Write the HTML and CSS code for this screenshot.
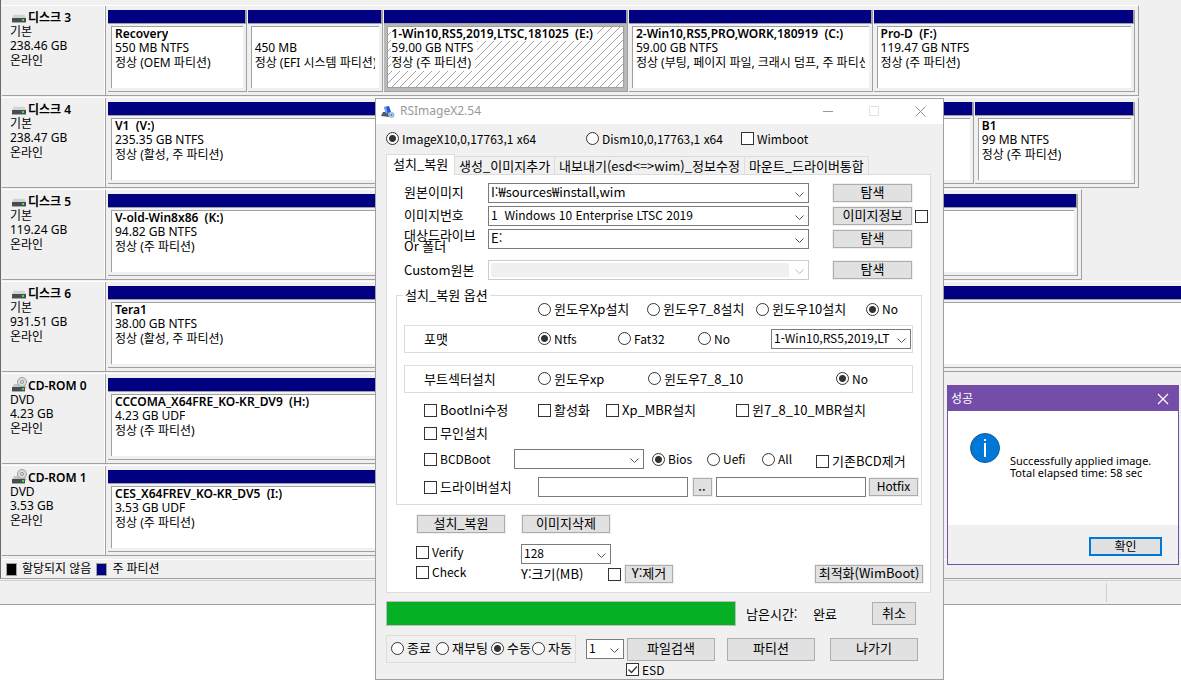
FILE: index.html
```html
<!DOCTYPE html>
<html lang="ko">
<head>
<meta charset="utf-8">
<title>RSImageX2.54</title>
<link rel="stylesheet" href="styles.css">
</head>
<body>
<svg class="defs" aria-hidden="true">
  <symbol id="drive" viewBox="0 0 14 9">
    <path d="M2 0h10l2 4H0z" fill="#cfd2d6"/><path d="M2.500 0h9l.5 1H2z" fill="#e6e8ea"/>
    <path d="M0 4h14v4H0z" fill="#4a4d50"/><path d="M0 8h14v1H0z" fill="#a5a8ab"/>
    <path d="M10 5h2v2h-2z" fill="#2fe84a"/>
  </symbol>
  <symbol id="cdrom" viewBox="0 0 16 15">
    <path d="M2 7h11l2 4H0z" fill="#c3c6c9"/>
    <path d="M0 10h13v4H0z" fill="#4a4d50"/><path d="M0 14h13v1H0z" fill="#a5a8ab"/>
    <circle cx="10" cy="5" r="4.500" fill="#d9dcde" stroke="#9a9ea1"/>
    <circle cx="10" cy="5" r="1.500" fill="#f4f4f4" stroke="#8b8f92"/>
    <path d="M10 11h2v2h-2z" fill="#2fe84a"/>
  </symbol>
</svg>

<main class="manager">
  <section class="view">
    <div class="disk disk-wide">
      <div class="disk-info"><b><svg class="ico"><use href="#drive"/></svg>디스크 3</b><span>기본</span><span>238.46 GB</span><span>온라인</span></div>
      <div class="parts">
        <article class="part" style="flex-grow:139"><div class="body"><b>Recovery</b><span>550 MB NTFS</span><span>정상 (OEM 파티션)</span></div></article>
        <article class="part" style="flex-grow:136"><div class="body"><b>&nbsp;</b><span>450 MB</span><span>정상 (EFI 시스템 파티션)</span></div></article>
        <article class="part selected" style="flex-grow:245"><div class="body"><b>1-Win10,RS5,2019,LTSC,181025 &nbsp;(E:)</b><span>59.00 GB NTFS</span><span>정상 (주 파티션)</span></div></article>
        <article class="part" style="flex-grow:245"><div class="body"><b>2-Win10,RS5,PRO,WORK,180919 &nbsp;(C:)</b><span>59.00 GB NTFS</span><span>정상 (부팅, 페이지 파일, 크래시 덤프, 주 파티션)</span></div></article>
        <article class="part" style="flex-grow:263"><div class="body"><b>Pro-D &nbsp;(F:)</b><span>119.47 GB NTFS</span><span>정상 (주 파티션)</span></div></article>
      </div>
    </div>
    <div class="disk disk-wide">
      <div class="disk-info"><b><svg class="ico"><use href="#drive"/></svg>디스크 4</b><span>기본</span><span>238.47 GB</span><span>온라인</span></div>
      <div class="parts">
        <article class="part" style="flex-grow:869"><div class="body"><b>V1 &nbsp;(V:)</b><span>235.35 GB NTFS</span><span>정상 (활성, 주 파티션)</span></div></article>
        <article class="part" style="flex-grow:160"><div class="body"><b>B1</b><span>99 MB NTFS</span><span>정상 (주 파티션)</span></div></article>
      </div>
    </div>
    <div class="disk disk-mid">
      <div class="disk-info"><b><svg class="ico"><use href="#drive"/></svg>디스크 5</b><span>기본</span><span>119.24 GB</span><span>온라인</span></div>
      <div class="parts">
        <article class="part" style="flex-grow:1"><div class="body"><b>V-old-Win8x86 &nbsp;(K:)</b><span>94.82 GB NTFS</span><span>정상 (주 파티션)</span></div></article>
      </div>
    </div>
    <div class="disk disk-full">
      <div class="disk-info"><b><svg class="ico"><use href="#drive"/></svg>디스크 6</b><span>기본</span><span>931.51 GB</span><span>온라인</span></div>
      <div class="parts">
        <article class="part" style="flex-grow:1"><div class="body"><b>Tera1</b><span>38.00 GB NTFS</span><span>정상 (활성, 주 파티션)</span></div></article>
      </div>
    </div>
    <div class="disk disk-short">
      <div class="disk-info"><b><svg class="ico cd"><use href="#cdrom"/></svg>CD-ROM 0</b><span>DVD</span><span>4.23 GB</span><span>온라인</span></div>
      <div class="parts">
        <article class="part" style="flex-grow:1"><div class="body"><b>CCCOMA_X64FRE_KO-KR_DV9 &nbsp;(H:)</b><span>4.23 GB UDF</span><span>정상 (주 파티션)</span></div></article>
      </div>
    </div>
    <div class="disk disk-short">
      <div class="disk-info"><b><svg class="ico cd"><use href="#cdrom"/></svg>CD-ROM 1</b><span>DVD</span><span>3.53 GB</span><span>온라인</span></div>
      <div class="parts">
        <article class="part" style="flex-grow:1"><div class="body"><b>CES_X64FREV_KO-KR_DV5 &nbsp;(I:)</b><span>3.53 GB UDF</span><span>정상 (주 파티션)</span></div></article>
      </div>
    </div>
    <div class="legend"><i class="swatch black"></i><span>할당되지 않음</span><i class="swatch navy"></i><span>주 파티션</span></div>
  </section>
  <footer class="status"><i></i></footer>
</main>

<form class="tool">
  <header class="titlebar">
    <svg class="app-icon" viewBox="0 0 14 12" aria-hidden="true">
      <path d="M0 10l2-4h5l1 5z" fill="#55595f"/><path d="M3 1l5-1 2 6-5 2z" fill="#2456d8"/><path d="M3 1l2-.5 1.500 6-1.500 1.500z" fill="#7fa2f2"/>
      <circle cx="10.500" cy="9" r="2.500" fill="#b9dcf2" stroke="#7fb0d0"/><circle cx="10.500" cy="9" r="1" fill="#3d78a5"/>
    </svg>
    <h1>RSImageX2.54</h1>
    <button type="button" class="cap" aria-label="최소화"><svg viewBox="0 0 11 11"><path d="M0 5.500h10" stroke="#999"/></svg></button>
    <button type="button" class="cap" aria-label="최대화" disabled><svg viewBox="0 0 11 11"><path d="M.5 .5h9v9h-9z" fill="none" stroke="#e2e2e2"/></svg></button>
    <button type="button" class="cap" aria-label="닫기"><svg viewBox="0 0 11 11"><path d="M.5 .5l10 10M10.500 .5l-10 10" stroke="#8a8a8a"/></svg></button>
  </header>
  <div class="tool-body">
    <div class="engine latin">
      <label><input type="radio" name="engine" checked>ImageX10,0,17763,1 x64</label>
      <label><input type="radio" name="engine">Dism10,0,17763,1 x64</label>
      <label><input type="checkbox">Wimboot</label>
    </div>
    <div class="tabs" role="tablist">
      <button type="button" role="tab" aria-selected="true">설치_복원</button>
      <button type="button" role="tab">생성_이미지추가</button>
      <button type="button" role="tab">내보내기(esd&lt;=&gt;wim)_정보수정</button>
      <button type="button" role="tab">마운트_드라이버통합</button>
    </div>
    <div class="panel" role="tabpanel">
      <div class="fields">
        <label for="src">원본이미지</label><select id="src"><option>I:₩sources₩install,wim</option></select><button type="button" class="btn">탐색</button><i></i>
        <label for="num">이미지번호</label><select id="num" class="latin"><option>1&nbsp; Windows 10 Enterprise LTSC 2019</option></select><button type="button" class="btn">이미지정보</button><input type="checkbox" aria-label="이미지정보">
        <label for="dst" class="two-line">대상드라이브<br>Or 폴더</label><select id="dst"><option>E:</option></select><button type="button" class="btn">탐색</button><i></i>
      </div>
      <div class="fields fields-custom">
        <label for="cus">Custom원본</label><select id="cus" disabled><option></option></select><button type="button" class="btn">탐색</button><i></i>
      </div>
      <fieldset class="options">
        <legend>설치_복원 옵션</legend>
        <div class="row row-os">
          <label><input type="radio" name="os">윈도우Xp설치</label>
          <label><input type="radio" name="os">윈도우7_8설치</label>
          <label><input type="radio" name="os">윈도우10설치</label>
          <label class="latin"><input type="radio" name="os" checked>No</label>
        </div>
        <div class="box box-format">
          <span>포맷</span>
          <label class="latin"><input type="radio" name="fmt" checked>Ntfs</label>
          <label class="latin"><input type="radio" name="fmt">Fat32</label>
          <label class="latin"><input type="radio" name="fmt">No</label>
          <select class="latin" aria-label="포맷 이름"><option>1-Win10,RS5,2019,LT</option></select>
        </div>
        <div class="box box-boot">
          <span>부트섹터설치</span>
          <label><input type="radio" name="bs">윈도우xp</label>
          <label><input type="radio" name="bs">윈도우7_8_10</label>
          <label class="latin"><input type="radio" name="bs" checked>No</label>
        </div>
        <div class="row row-checks">
          <label><input type="checkbox">BootIni수정</label>
          <label><input type="checkbox">활성화</label>
          <label><input type="checkbox">Xp_MBR설치</label>
          <label><input type="checkbox">윈7_8_10_MBR설치</label>
        </div>
        <div class="row row-auto"><label><input type="checkbox">무인설치</label></div>
        <div class="row row-bcd">
          <label class="latin"><input type="checkbox">BCDBoot</label>
          <select aria-label="BCDBoot"><option></option></select>
          <label class="latin first"><input type="radio" name="fw" checked>Bios</label>
          <label class="latin"><input type="radio" name="fw">Uefi</label>
          <label class="latin"><input type="radio" name="fw">All</label>
          <label class="low"><input type="checkbox">기존BCD제거</label>
        </div>
        <div class="row row-driver">
          <label><input type="checkbox">드라이버설치</label>
          <input type="text" aria-label="드라이버 경로">
          <button type="button" class="btn dots">..</button>
          <input type="text" aria-label="Hotfix 경로">
          <button type="button" class="btn hotfix latin">Hotfix</button>
        </div>
      </fieldset>
      <div class="actions">
        <button type="button" class="btn">설치_복원</button>
        <button type="button" class="btn">이미지삭제</button>
      </div>
      <div class="extras">
        <label class="latin top"><input type="checkbox">Verify</label>
        <select id="ysize" class="latin"><option>128</option></select>
        <i class="rest"></i>
        <label class="latin top"><input type="checkbox">Check</label>
        <label for="ysize">Y:크기(MB)</label>
        <input type="checkbox" aria-label="Y:제거">
        <button type="button" class="btn">Y:제거</button>
        <button type="button" class="btn optimize">최적화(WimBoot)</button>
      </div>
    </div>
    <div class="progress-row">
      <progress value="100" max="100" aria-label="진행률"></progress>
      <span class="remain">남은시간:</span><span class="done">완료</span>
      <button type="button" class="btn">취소</button>
    </div>
    <div class="bottom-row">
      <div class="after">
        <label><input type="radio" name="after">종료</label>
        <label><input type="radio" name="after">재부팅</label>
        <label><input type="radio" name="after" checked>수동</label>
        <label><input type="radio" name="after">자동</label>
      </div>
      <select class="latin" aria-label="번호"><option>1</option></select>
      <button type="button" class="btn">파일검색</button>
      <button type="button" class="btn">파티션</button>
      <button type="button" class="btn">나가기</button>
    </div>
    <div class="esd latin"><label><input type="checkbox" checked>ESD</label></div>
  </div>
</form>

<section class="message" role="dialog" aria-labelledby="msg-title">
  <header><h2 id="msg-title">성공</h2><button type="button" aria-label="닫기"><svg viewBox="0 0 12 12"><path d="M1 1l10 10M11 1L1 11" stroke="#fff" stroke-width="1.200"/></svg></button></header>
  <div class="message-body">
    <svg class="info" viewBox="0 0 30 30" aria-hidden="true"><circle cx="15" cy="15" r="14.500" fill="#0078d7" stroke="#1a5a94"/><path d="M14 6h2v2h-2zM14 10h2v14h-2z" fill="#fff"/></svg>
    <p>Successfully applied image.<br>Total elapsed time: 58 sec</p>
  </div>
  <footer><button type="button">확인</button></footer>
</section>
</body>
</html>
```
FILE: styles.css
```css
* { box-sizing: border-box; }

body {
  margin: 0;
  min-height: 100vh;
  background: #fff;
  color: #000;
  overflow: hidden;
  font: 12px/14px "Noto Sans", "Noto Sans CJK KR", sans-serif;
}

h1, h2, p { margin: 0; font-size: 12px; font-weight: 400; }
button, input, select { font: inherit; color: inherit; margin: 0; }
.defs { position: absolute; width: 0; height: 0; }

/* disk manager */
.manager { background: #f0f0f0; border-bottom: 1px solid #a0a0a0; }
.view {
  border-left: 1px solid #696969;
  border-bottom: 1px solid #a0a0a0;
  padding: 5px 0 0 1px;
  overflow: hidden;
}
.disk {
  display: grid;
  grid-template-columns: 103px minmax(0, 1fr);
  border-top: 1px solid #fff;
  border-bottom: 1px solid #a0a0a0;
  margin-bottom: 1px;
}
.disk-wide { margin-right: 42px; border-right: 1px solid #a0a0a0; }
.disk-mid { margin-right: 99px; border-right: 1px solid #a0a0a0; }
.disk-full { margin-right: -8px; }
.disk-short { margin-right: 340px; border-right: 1px solid #a0a0a0; }
.disk-info {
  display: flex;
  flex-direction: column;
  padding: 5px 0 0 8px;
  border-right: 1px solid #fff;
  white-space: nowrap;
}
.disk-info b { display: flex; align-items: center; padding-left: 2px; gap: 2px; }
.disk-info span:last-child { line-height: 16px; }
.disk b { font-weight: 600; }
.ico { width: 14px; height: 9px; flex: none; }
.ico.cd { width: 16px; height: 15px; margin: -4px -2px 0 0; }
.parts {
  display: flex;
  min-width: 0;
  padding: 4px 2px 3px 2px;
  border-left: 1px solid #a0a0a0;
}
.part {
  flex: 1 1 0;
  min-width: 0;
  border-right: 1px solid #a0a0a0;
  border-bottom: 1px solid #a0a0a0;
  margin-right: 1px;
}
.part::before {
  content: "";
  display: block;
  height: 13px;
  background: #000080;
  border-right: 1px solid #a0a0a0;
  border-bottom: 1px solid #a0a0a0;
}
.part .body {
  display: flex;
  flex-direction: column;
  align-items: flex-start;
  height: 62px;
  margin: 2px 3px 3px 3px;
  padding: 0 4px 0 3px;
  border-top: 1px solid #a0a0a0;
  border-left: 1px solid #a0a0a0;
  background: #fff;
  overflow: hidden;
  white-space: nowrap;
}
.part .body > * { max-width: 100%; overflow: hidden; flex: none; }
.part .body > span:last-child { line-height: 16px; }
.part.selected { background: #b8b8b8; }
.part.selected .body {
  border: 1px solid #a0a0a0;
  background: #fff url("data:image/svg+xml,%3Csvg xmlns='http://www.w3.org/2000/svg' width='8' height='8' shape-rendering='crispEdges'%3E%3Cpath d='M0 7h1v1H0zM1 6h1v1H1zM2 5h1v1H2zM3 4h1v1H3zM4 3h1v1H4zM5 2h1v1H5zM6 1h1v1H6zM7 0h1v1H7z' fill='%23a0a0a0'/%3E%3C/svg%3E");
}
.part.selected .body > * { background: #fff; padding-right: 4px; }
.legend {
  display: flex;
  align-items: center;
  height: 19px;
  margin-top: 3px;
  padding-left: 4px;
  border-top: 1px solid #fff;
}
.swatch { width: 11px; height: 13px; border: 1px solid #a0a0a0; margin-right: 5px; }
.swatch.black { background: #000; }
.swatch.navy { background: #000080; margin-left: 5px; }
.status { height: 24px; margin-top: 1px; border-top: 1px solid #d0d0d0; padding: 2px 0; }
.status i { display: block; height: 19px; margin-right: 74px; border-right: 1px solid #d0d0d0; }

/* imaging tool window */
.tool {
  position: absolute;
  left: 375px;
  top: 98px;
  width: 569px;
  border: 1px solid #a0a0a0;
  background: #f0f0f0;
  font: 13px/16px "Noto Sans CJK KR", sans-serif;
}
.tool .latin { font-size: 12px; }
.titlebar {
  display: flex;
  align-items: center;
  height: 25px;
  padding: 0 17px 0 5px;
  background: #fff;
  color: #999;
  font-family: "Noto Sans", sans-serif;
}
.titlebar h1 { flex: 1; padding-left: 5px; line-height: 14px; padding-bottom: 2px; }
.app-icon { width: 14px; height: 12px; }
.cap { width: 11px; height: 11px; margin-left: 35px; padding: 0; border: 0; background: none; }
.cap svg, .message header svg { display: block; width: 100%; height: 100%; }
.tool-body { padding: 0 12px 3px 10px; }
.tool label { display: flex; align-items: center; gap: 3px; white-space: nowrap; }

input[type="radio"], input[type="checkbox"] {
  appearance: none;
  flex: none;
  width: 13px;
  height: 13px;
  border: 1px solid #333;
  background: #fff;
}
input[type="radio"] { border-radius: 50%; }
input[type="radio"]:checked { background: radial-gradient(circle at center, #333 3px, #fff 4px); }
input[type="checkbox"]:checked {
  background: #fff url("data:image/svg+xml,%3Csvg xmlns='http://www.w3.org/2000/svg' width='11' height='11'%3E%3Cpath d='M1.500 5.500l3 3 5.500-6' fill='none' stroke='%23333' stroke-width='1.300'/%3E%3C/svg%3E");
}
input[type="text"] { min-width: 0; height: 20px; border: 1px solid #7a7a7a; padding: 0 2px; background: #fff; }
select {
  appearance: none;
  width: 100%;
  min-width: 0;
  height: 20px;
  padding: 0 16px 2px 2px;
  border: 1px solid #7a7a7a;
  border-radius: 0;
  background: #fff url("data:image/svg+xml,%3Csvg xmlns='http://www.w3.org/2000/svg' width='9' height='6'%3E%3Cpath d='M.5 .5l4 4 4-4' fill='none' stroke='%23555'/%3E%3C/svg%3E") no-repeat right 4px top 8px;
}
select:disabled {
  opacity: 1;
  border-color: #ccc;
  background:
    url("data:image/svg+xml,%3Csvg xmlns='http://www.w3.org/2000/svg' width='9' height='6'%3E%3Cpath d='M.5 .5l4 4 4-4' fill='none' stroke='%23bbb'/%3E%3C/svg%3E") no-repeat right 4px top 8px,
    linear-gradient(#f0f0f0, #f0f0f0) no-repeat 2px 2px / calc(100% - 21px) 14px,
    #fff;
}
.btn {
  height: 18px;
  padding: 0 0 2px;
  border: 1px solid #adadad;
  background: #e1e1e1;
  line-height: 14px;
  white-space: nowrap;
}
.panel .btn { box-shadow: 0 0 0 1px #f0f0f0; }

.engine { display: grid; grid-template-columns: 200px 155px 1fr; align-items: center; height: 29px; }
.tabs { display: flex; align-items: flex-end; height: 21px; }
.tabs button {
  height: 18px;
  padding: 0 4px;
  border: 1px solid #dcdcdc;
  border-left: 0;
  border-bottom: 0;
  background: #f0f0f0;
  line-height: 16px;
  white-space: nowrap;
}
.tabs button[aria-selected="true"] {
  z-index: 1;
  height: 21px;
  margin-bottom: -1px;
  padding: 0 6px 3px;
  border-left: 1px solid #dcdcdc;
  background: #fff;
}
.panel { padding: 8px 0; border: 1px solid #dcdcdc; background: #fff; }
.fields {
  display: grid;
  grid-template-columns: 84px minmax(0, 1fr) 103px 16px;
  grid-auto-rows: 20px;
  row-gap: 3px;
  align-items: center;
  padding: 0 2px 0 17px;
}
.fields label { padding-bottom: 2px; }
.fields .btn { width: 79px; justify-self: end; }
.fields > input { justify-self: end; }
.fields-custom { margin-top: 11px; }
.fields-custom label { padding-bottom: 0; }
.fields .two-line { align-self: start; line-height: 11px; }

.options {
  min-width: 0;
  margin: 9px 8px 0 9px;
  padding: 0 0 7px;
  border: 1px solid #dcdcdc;
}
.options legend { margin-left: 6px; padding: 0 2px; line-height: 12px; }
.row, .box { display: grid; align-items: center; }
.row { padding-left: 27px; }
.row-os { height: 15px; padding-left: 141px; grid-template-columns: 109px 109px 110px 1fr; }
.box { height: 28px; margin: 9px 8px 0 7px; padding: 0 1px 1px 19px; border: 1px solid #dcdcdc; }
.box-format { grid-template-columns: 114px 80px 80px 73px minmax(0, 1fr); }
.box-boot { margin-top: 12px; grid-template-columns: 114px 110px 188px 1fr; }
.row-checks { height: 16px; margin-top: 9px; grid-template-columns: 114px 68px 130px 1fr; }
.row-auto { height: 16px; margin-top: 7px; }
.row-bcd { margin-top: 8px; grid-template-columns: 90px 130px 63px 55px 54px 1fr; }
.row-bcd .first { margin-left: 8px; }
.row-bcd .low { padding-top: 4px; }
.row-driver { margin-top: 8px; padding-right: 3px; grid-template-columns: 114px minmax(0, 1fr) 28px minmax(0, 1fr) 52px; }
.row-driver .dots { width: 19px; justify-self: center; }
.row-driver .hotfix { width: 49px; justify-self: end; }

.actions { display: flex; gap: 17px; margin-top: 10px; padding-left: 30px; }
.actions .btn { width: 88px; }
.extras {
  display: grid;
  grid-template-columns: 105px 90px 14px 48px 1fr;
  grid-auto-rows: 20px;
  align-items: center;
  margin-top: 11px;
  padding: 0 7px 0 29px;
}
.extras .rest { grid-column: 3 / -1; }
.extras .top { align-self: start; }
.extras > input { justify-self: start; margin-left: -3px; }
.extras .optimize { width: 108px; justify-self: end; }

.progress-row { display: flex; align-items: center; margin-top: 8px; padding-right: 15px; }
progress {
  appearance: none;
  flex: none;
  width: 350px;
  height: 25px;
  border: 1px solid #bcbcbc;
  background: #e6e6e6;
}
progress::-webkit-progress-bar { background: #e6e6e6; }
progress::-webkit-progress-value { background: #06b025; }
.remain { width: 67px; margin-left: 10px; }
.done { flex: 1; }
.progress-row .btn { width: 44px; height: 23px; }
.bottom-row { display: flex; align-items: center; margin-top: 9px; padding-right: 13px; }
.after {
  display: grid;
  grid-template-columns: 45px 55px 41px 1fr;
  align-items: center;
  flex: none;
  width: 190px;
  height: 28px;
  padding: 0 0 2px 4px;
  border: 1px solid #dcdcdc;
}
.bottom-row select { flex: none; width: 38px; margin: 0 3px 0 10px; }
.bottom-row .btn { flex: none; width: 88px; height: 23px; }
.bottom-row .btn + .btn { margin-left: 12px; }
.bottom-row .btn:last-child { margin-left: auto; }
.esd { display: flex; padding-left: 240px; line-height: 13px; }

/* message box */
.message {
  position: absolute;
  left: 947px;
  top: 385px;
  width: 232px;
  border: 1px solid #744da9;
  background: #fff;
}
.message header {
  display: flex;
  align-items: center;
  justify-content: space-between;
  height: 25px;
  padding: 0 9px 0 3px;
  background: #744da9;
  color: #fff;
}
.message header button { width: 12px; height: 12px; padding: 0; border: 0; background: none; }
.message-body { display: flex; align-items: flex-start; gap: 10px; height: 114px; padding: 22px 0 0 22px; }
.info { width: 30px; height: 30px; flex: none; }
.message-body p { padding-top: 22px; font-size: 11px; line-height: 12px; white-space: nowrap; }
.message footer { display: flex; justify-content: flex-end; padding: 12px 16px 8px; background: #f0f0f0; }
.message footer button { width: 73px; height: 19px; padding: 0; border: 2px solid #0078d7; background: #e1e1e1; line-height: 14px; }
```
